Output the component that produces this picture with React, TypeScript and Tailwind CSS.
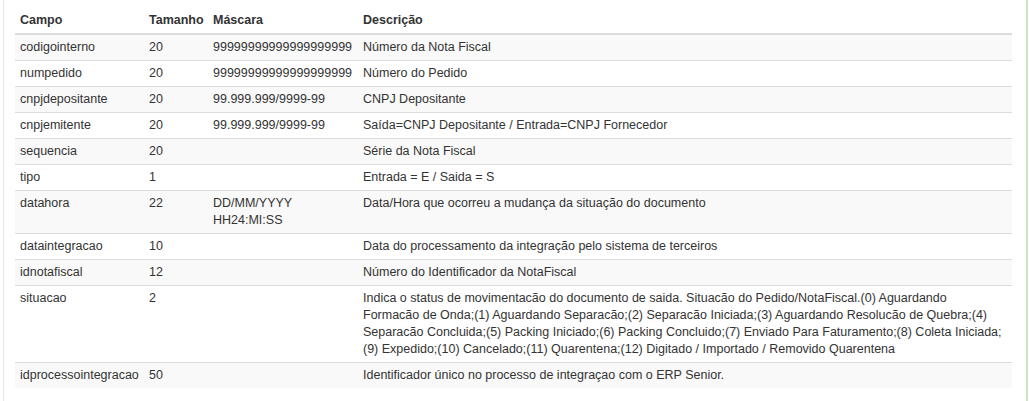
const rows: { campo: string; tamanho: string; mascara: string[]; descricao: string[] }[] = [
  { campo: "codigointerno", tamanho: "20", mascara: ["99999999999999999999"], descricao: ["Número da Nota Fiscal"] },
  { campo: "numpedido", tamanho: "20", mascara: ["99999999999999999999"], descricao: ["Número do Pedido"] },
  { campo: "cnpjdepositante", tamanho: "20", mascara: ["99.999.999/9999-99"], descricao: ["CNPJ Depositante"] },
  { campo: "cnpjemitente", tamanho: "20", mascara: ["99.999.999/9999-99"], descricao: ["Saída=CNPJ Depositante / Entrada=CNPJ Fornecedor"] },
  { campo: "sequencia", tamanho: "20", mascara: [], descricao: ["Série da Nota Fiscal"] },
  { campo: "tipo", tamanho: "1", mascara: [], descricao: ["Entrada = E / Saida = S"] },
  { campo: "datahora", tamanho: "22", mascara: ["DD/MM/YYYY", "HH24:MI:SS"], descricao: ["Data/Hora que ocorreu a mudança da situação do documento"] },
  { campo: "dataintegracao", tamanho: "10", mascara: [], descricao: ["Data do processamento da integração pelo sistema de terceiros"] },
  { campo: "idnotafiscal", tamanho: "12", mascara: [], descricao: ["Número do Identificador da NotaFiscal"] },
  {
    campo: "situacao",
    tamanho: "2",
    mascara: [],
    // quebras de linha iguais ao original
    descricao: [
      "Indica o status de movimentacão do documento de saida. Situacão do Pedido/NotaFiscal.(0) Aguardando",
      "Formacão de Onda;(1) Aguardando Separacão;(2) Separacão Iniciada;(3) Aguardando Resolucão de Quebra;(4)",
      "Separacão Concluida;(5) Packing Iniciado;(6) Packing Concluido;(7) Enviado Para Faturamento;(8) Coleta Iniciada;",
      "(9) Expedido;(10) Cancelado;(11) Quarentena;(12) Digitado / Importado / Removido Quarentena",
    ],
  },
  { campo: "idprocessointegracao", tamanho: "50", mascara: [], descricao: ["Identificador único no processo de integraçao com o ERP Senior."] },
]

export default function App() {
  return (
    <div className="h-[401px] w-[1029px] bg-white font-['Liberation_Sans',Arial,sans-serif] text-[12.5px] leading-[17px] text-[#333]">
      <div className="ml-[3px] h-full w-[1025px] border-l border-r-2 border-l-[#e3ecda] border-r-[#c9e8ba] pl-[11px] pt-[8px]">
        <table className="w-[997px] table-fixed border-collapse">
          <colgroup>
            <col className="w-[129px]" />
            <col className="w-[64px]" />
            <col className="w-[150px]" />
            <col />
          </colgroup>
          <thead>
            <tr>
              <th className="border-b-2 border-[#ddd] px-[5px] py-[4px] text-left font-bold">Campo</th>
              <th className="border-b-2 border-[#ddd] px-[5px] py-[4px] text-left font-bold">Tamanho</th>
              <th className="border-b-2 border-[#ddd] px-[5px] py-[4px] text-left font-bold">Máscara</th>
              <th className="border-b-2 border-[#ddd] px-[5px] py-[4px] text-left font-bold">Descrição</th>
            </tr>
          </thead>
          <tbody>
            {rows.map((row, i) => (
              <tr key={row.campo} className={i % 2 === 0 ? "bg-[#f9f9f9]" : ""}>
                <td className="border-t border-[#ddd] px-[5px] py-[4px] align-top">{row.campo}</td>
                <td className="border-t border-[#ddd] px-[5px] py-[4px] align-top">{row.tamanho}</td>
                <td className="border-t border-[#ddd] px-[5px] py-[4px] align-top">
                  {row.mascara.map((m) => (
                    <div key={m}>{m}</div>
                  ))}
                </td>
                <td className="border-t border-[#ddd] px-[5px] py-[4px] align-top whitespace-nowrap">
                  {row.descricao.map((d) => (
                    <div key={d}>{d}</div>
                  ))}
                </td>
              </tr>
            ))}
          </tbody>
        </table>
      </div>
    </div>
  )
}
